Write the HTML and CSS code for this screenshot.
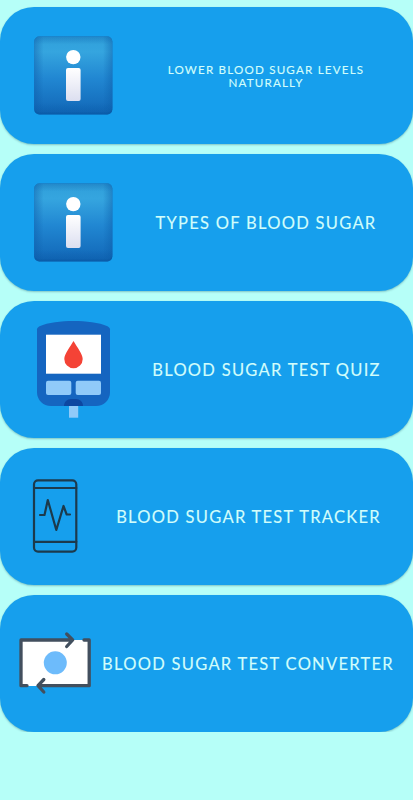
FILE: index.html
```
<!DOCTYPE html>
<html lang="en">
<head>
  <meta charset="UTF-8">
  <meta name="viewport" content="width=device-width, initial-scale=1.0">
  <title>Blood Sugar</title>
  <link rel="stylesheet" href="styles.css">
</head>
<body>

<!-- shared gradients -->
<svg class="defs" width="0" height="0">
  <defs>
    <linearGradient id="tile" x1="0" y1="0" x2="0" y2="1">
      <stop offset="0" stop-color="#2f9fda"/>
      <stop offset=".2" stop-color="#35a5df"/>
      <stop offset=".55" stop-color="#2187d2"/>
      <stop offset="1" stop-color="#1268b8"/>
    </linearGradient>
    <linearGradient id="side" x1="0" y1="0" x2="1" y2="0">
      <stop offset="0" stop-color="#0b5ca8" stop-opacity=".45"/>
      <stop offset=".12" stop-color="#0b5ca8" stop-opacity="0"/>
      <stop offset=".88" stop-color="#0b5ca8" stop-opacity="0"/>
      <stop offset="1" stop-color="#0b5ca8" stop-opacity=".45"/>
    </linearGradient>
    <linearGradient id="edge" x1="0" y1="0" x2="0" y2="1">
      <stop offset="0" stop-color="#0b5ca8" stop-opacity=".35"/>
      <stop offset=".1" stop-color="#0b5ca8" stop-opacity="0"/>
      <stop offset=".85" stop-color="#0b5ca8" stop-opacity="0"/>
      <stop offset="1" stop-color="#0b5ca8" stop-opacity=".5"/>
    </linearGradient>
    <linearGradient id="stem" x1="0" y1="0" x2="0" y2="1">
      <stop offset="0" stop-color="#fff"/>
      <stop offset="1" stop-color="#dcdff0"/>
    </linearGradient>
    <symbol id="info" viewBox="0 0 80 80">
      <rect x="1.300" y="1.500" width="78" height="78" rx="5" fill="#0b5dab"/>
      <rect x="1.300" y="1.500" width="78" height="76" rx="5" fill="url(#tile)"/>
      <rect x="1.300" y="1.500" width="78" height="78" rx="5" fill="url(#side)"/>
      <rect x="1.300" y="1.500" width="78" height="78" rx="5" fill="url(#edge)"/>
      <circle cx="40.300" cy="22.100" r="7.200" fill="#fff"/>
      <rect x="33" y="33" width="14.600" height="33" rx="2" fill="url(#stem)"/>
    </symbol>
  </defs>
</svg>

<div class="menu">
  <button class="card">
    <svg class="icon info" width="80" height="80"><use href="#info"/></svg>
    <span class="label small">LOWER BLOOD SUGAR LEVELS NATURALLY</span>
  </button>

  <button class="card">
    <svg class="icon info" width="80" height="80"><use href="#info"/></svg>
    <span class="label">TYPES OF BLOOD SUGAR</span>
  </button>

  <button class="card">
    <svg class="icon meter" width="76" height="98" viewBox="0 0 76 98">
      <path d="M1 9.500C1 8 2 7 3.500 6.200C12 2.500 25 1 37.500 1S63 2.500 71.500 6.200C73 7 74 8 74 9.500V72C74 80 68 86 60 86H15C7 86 1 80 1 72Z" fill="#1565c0"/>
      <path d="M28 86C28 82 31 79 35 79H40C44 79 47 82 47 86Z" fill="#0d47a1"/>
      <rect x="10" y="14.700" width="55" height="39" fill="#fff"/>
      <path d="M37.500 21C34 27 28.300 34 28.300 39A9.200 9.200 0 0 0 46.700 39C46.700 34 41 27 37.500 21Z" fill="#f44336"/>
      <rect x="10" y="60.700" width="25.300" height="14.300" rx="2" fill="#90caf9"/>
      <rect x="39.700" y="60.700" width="25.300" height="14.300" rx="2" fill="#90caf9"/>
      <rect x="33" y="86" width="9.200" height="11.700" fill="#90caf9"/>
    </svg>
    <span class="label">BLOOD SUGAR TEST QUIZ</span>
  </button>

  <button class="card">
    <svg class="icon phone" width="46" height="76" viewBox="0 0 46 76" fill="none" stroke="#1c3a4c" stroke-width="2.200" stroke-linecap="round" stroke-linejoin="round">
      <rect x="2" y="2.300" width="42.300" height="71.300" rx="4"/>
      <path d="M2 10H44.300M2 63.800H44.300"/>
      <path d="M8 37H12.500L15.800 22L24.300 52L31.500 28L34.700 36.500H38"/>
    </svg>
    <span class="label">BLOOD SUGAR TEST TRACKER</span>
  </button>

  <button class="card">
    <svg class="icon convert" width="74" height="64" viewBox="0 0 74 64" fill="none" stroke="#424f5e" stroke-width="3.300" stroke-linecap="round" stroke-linejoin="round">
      <rect x="3" y="9" width="68" height="46" fill="#fff" stroke="none"/>
      <circle cx="37.300" cy="31.800" r="11.500" fill="#6dbbfb" stroke="none"/>
      <path d="M9 54.700H3V9H53M48.700 3L54.700 9L48.700 15.500"/>
      <path d="M66 9H71.200V54.700H21.500M25.800 48.500L20 54.700L25.800 61"/>
    </svg>
    <span class="label">BLOOD SUGAR TEST CONVERTER</span>
  </button>
</div>

</body>
</html>
```

FILE: styles.css
```
html,body{
  background-color: #b6fff8;
}
body{
  margin: 0;
  font-family: Lato, "Open Sans", sans-serif;
}

.defs{
  position: absolute;
}

.menu{
  display: flex;
  flex-direction: column;
  gap: 9.5px;
  padding-top: 6.5px;
}

.card{
  display: flex;
  align-items: center;
  box-sizing: border-box;
  width: 100%;
  height: 137.5px;
  padding: 0;
  border: 0;
  border-radius: 34px;
  background-color: #169fed;
  box-shadow: 0 1px 2px rgba(0, 60, 80, .3);
  color: #d2fdfb;
  font-family: inherit;
}

.icon{
  flex: none;
}
.info{
  margin: 0 6px 0 33px;
}
.meter{
  margin: 0 8px 0 36px;
}
.phone{
  margin: 0 6px 0 32px;
}
.convert{
  margin: 0 -9px 0 18px;
}

.label{
  flex: 1;
  padding-top: 2px;
  font-size: 16.5px;
  line-height: 20px;
  letter-spacing: 1.28px;
  text-align: center;
  white-space: nowrap;
  -webkit-text-stroke: .15px #d2fdfb;
}
.small{
  padding: 2px 40px 0;
  font-size: 11.6px;
  line-height: 13.5px;
  letter-spacing: 1.2px;
  white-space: normal;
}
```
